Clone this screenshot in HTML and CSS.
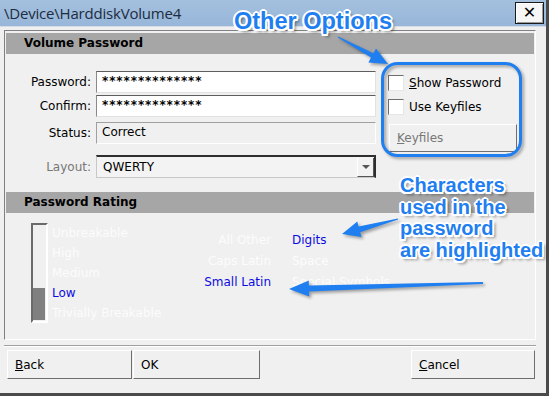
FILE: index.html
```html
<!DOCTYPE html>
<html lang="en">

<head>
  <meta charset="UTF-8">
  <title>Volume Password</title>
  <link rel="stylesheet" href="styles.css">
</head>

<body>
  <div class="window">
    <div class="titlebar">
      <span class="title">\Device\HarddiskVolume4</span>
      <button class="close">&#x2715;</button>
    </div>

    <div class="body">
      <div class="group">
        <div class="group-head">Volume Password</div>
        <div class="vp">
          <div class="fields">
            <label class="lbl">Password:</label>
            <div class="input stars">**************</div>
            <label class="lbl">Confirm:</label>
            <div class="input stars">**************</div>
            <label class="lbl">Status:</label>
            <div class="input status">Correct</div>
            <label class="lbl dim">Layout:</label>
            <div class="select">
              <span>QWERTY</span>
              <span class="drop"><i></i></span>
            </div>
          </div>
          <div class="opts">
            <div class="check"><span class="box"></span><span><u>S</u>how Password</span></div>
            <div class="check"><span class="box"></span><span>Use Keyfiles</span></div>
            <button class="btn keyfiles"><u>K</u>eyfiles</button>
          </div>
        </div>

        <div class="group-head">Password Rating</div>
        <div class="rating">
          <div class="meter"><div class="meter-fill"></div></div>
          <ul class="levels">
            <li>Unbreakable</li>
            <li>High</li>
            <li>Medium</li>
            <li class="on">Low</li>
            <li>Trivially Breakable</li>
          </ul>
          <div class="charsets">
            <span class="r">All Other</span><span class="on">Digits</span>
            <span class="r">Caps Latin</span><span>Space</span>
            <span class="r on">Small Latin</span><span>Special Symbols</span>
          </div>
        </div>
      </div>

      <div class="buttons">
        <button class="btn"><u>B</u>ack</button>
        <button class="btn ok">OK</button>
        <button class="btn cancel"><u>C</u>ancel</button>
      </div>
    </div>

    <!-- annotations drawn over the dialog -->
    <svg class="marks" width="549" height="396" viewBox="0 0 549 396">
      <rect x="382.5" y="63.5" width="138" height="92" rx="15" ry="15" fill="none" stroke="#1f7ff0" stroke-width="3"/>
      <polygon points="338.2,36.6 373.4,53.2 376,48.4 388,64 368.4,62.4 371,57.6 337.8,37.4" fill="#1f7ff0"/>
      <polygon points="397.9,218.5 358.6,226.4 357.3,221.6 342,234 361.5,237 360.2,232.2 398.1,219.5" fill="#1f7ff0"/>
      <polygon points="483,282 308.9,285.4 308.8,280.4 289,289 309.2,296.4 309.1,291.4 483,284" fill="#1f7ff0"/>
    </svg>
    <div class="note note-opts">Other Options</div>
    <div class="note note-chars">Characters<br>used in the<br>password<br>are highlighted</div>
  </div>
</body>

</html>
```

FILE: styles.css
```css
* {
  margin: 0;
  padding: 0;
  box-sizing: border-box;
}

body {
  background: #fff;
  font-family: "DejaVu Sans", sans-serif;
  font-size: 12px;
  color: #000;
}

button {
  font: inherit;
  color: inherit;
}

.window {
  position: relative;
  width: 549px;
  height: 396px;
  background: #f0f0f0;
  border-right: 3px solid #4a4a4a;
  border-bottom: 3px solid #4a4a4a;
}

.titlebar {
  height: 27px;
  background: linear-gradient(#a4c0de, #97b6d9);
  display: flex;
  align-items: center;
  padding-left: 4px;
  border-bottom: 1px solid #d8dde3;
}

.title {
  font-family: "Open Sans", sans-serif;
  font-size: 15px;
  color: #1d2c40;
  letter-spacing: -0.2px;
}

.close {
  margin-left: auto;
  margin-right: 2px;
  width: 29px;
  height: 22px;
  background: #f6f6f6;
  border: 1px solid #1a1a1a;
  box-shadow: inset 1px 1px 0 #fff, inset -1px -1px 0 #9a9a9a;
  font-family: "DejaVu Sans", sans-serif;
  font-weight: bold;
  font-size: 16px;
  line-height: 18px;
}

.body {
  padding: 3px 10px 0 4px;
}

.group {
  height: 310px;
  border: 1px solid;
  border-color: #808080 #fff #fff #808080;
  padding: 2px 1px 0;
}

.group-head {
  height: 21px;
  background: #a6a6a6;
  font-weight: bold;
  padding-left: 18px;
  line-height: 21px;
}

/* volume password */

.vp {
  height: 138px;
  display: flex;
}

.fields {
  display: grid;
  grid-template-columns: 85px 280px;
  grid-template-rows: 22px 24px 27px 34px;
  column-gap: 5px;
  align-items: end;
  padding-top: 17px;
}

.lbl {
  text-align: right;
  line-height: 22px;
}

.dim {
  color: #777;
}

.input {
  height: 22px;
  background: #fff;
  border: 1px solid;
  border-color: #5e5e5e #e2e2e2 #e2e2e2 #8a8a8a;
  padding-left: 5px;
  line-height: 19px;
}

.stars {
  font-weight: bold;
  letter-spacing: 0.9px;
}

.status {
  background: #f0f0f0;
  border-color: #a0a0a0 #fff #fff #a0a0a0;
}

.select {
  height: 23px;
  display: flex;
  align-items: center;
  padding-left: 6px;
  background: #f3f3f3;
  border: 1px solid #c8c8c8;
  border-top: 2px solid #2e2e2e;
  border-right: 2px solid #2e2e2e;
}

.drop {
  margin-left: auto;
  width: 17px;
  height: 19px;
  background: #f2f2f2;
  border-left: 1px solid #fff;
  border-right: 1px solid #555;
  border-bottom: 1px solid #555;
  display: flex;
  align-items: center;
  justify-content: center;
}

.drop i {
  border-left: 4px solid transparent;
  border-right: 4px solid transparent;
  border-top: 4px solid #555;
}

.opts {
  margin-left: 12px;
  padding-top: 21px;
  display: flex;
  flex-direction: column;
}

.check {
  display: flex;
  align-items: center;
  gap: 5px;
  height: 16px;
  margin-bottom: 8px;
}

.check u {
  text-decoration: underline;
}

.box {
  width: 16px;
  height: 16px;
  background: #fff;
  border: 1px solid;
  border-color: #6e6e6e #e6e6e6 #e6e6e6 #6e6e6e;
}

.btn {
  background: #f0f0f0;
  border: 1px solid;
  border-color: #fff #6e6e6e #6e6e6e #fff;
  text-align: left;
  padding-left: 7px;
}

.keyfiles {
  width: 128px;
  height: 28px;
  margin: 1px 0 0 1px;
  color: #777;
}

/* password rating */

.rating {
  display: flex;
  padding: 10px 0 0 25px;
}

.meter {
  width: 17px;
  height: 100px;
  border: 2px solid;
  border-color: #6a6a6a #fff #fff #6a6a6a;
  display: flex;
  flex-direction: column;
  justify-content: flex-end;
  padding: 0 1px 1px 0;
}

.meter-fill {
  height: 32px;
  background: #808080;
}

.levels {
  list-style: none;
  margin-left: 4px;
  line-height: 20px;
  width: 143px;
  color: #fcfcfc;
}

.on {
  color: #0c0ce2 !important;
}

.charsets {
  display: grid;
  grid-template-columns: 76px auto;
  grid-template-rows: 20px 22px 20px;
  column-gap: 21px;
  align-items: center;
  padding-top: 7px;
  color: #fcfcfc;
}

.charsets .r {
  text-align: right;
}

.buttons {
  margin-top: 5px;
  border-top: 1px solid #a0a0a0;
  box-shadow: inset 0 1px 0 #fff;
  display: flex;
  padding: 4px 0 0 3px;
}

.buttons .btn {
  height: 29px;
  width: 125px;
}

.buttons .ok {
  width: 127px;
  margin-left: 1px;
}

.buttons .cancel {
  width: 124px;
  margin-left: auto;
  margin-right: 1px;
}

/* annotations */

.marks {
  position: absolute;
  left: 0;
  top: 0;
  filter: drop-shadow(2px 2px 1.5px rgba(0, 0, 0, 0.35));
  pointer-events: none;
}

.note {
  position: absolute;
  font-family: "Liberation Sans", Arial, sans-serif;
  font-weight: bold;
  color: #1f7ff0;
  text-shadow: -1.5px -1.5px 0 #fff, 1.5px -1.5px 0 #fff, -1.5px 1.5px 0 #fff, 1.5px 1.5px 0 #fff,
    0 -2px 0 #fff, 0 2px 0 #fff, -2px 0 0 #fff, 2px 0 0 #fff, 3px 3px 3px rgba(0, 0, 0, 0.45);
}

.note-opts {
  left: 234px;
  top: 10px;
  font-size: 23.5px;
  line-height: 23px;
}

.note-chars {
  left: 400px;
  top: 175px;
  font-size: 20px;
  line-height: 21.6px;
}
```
